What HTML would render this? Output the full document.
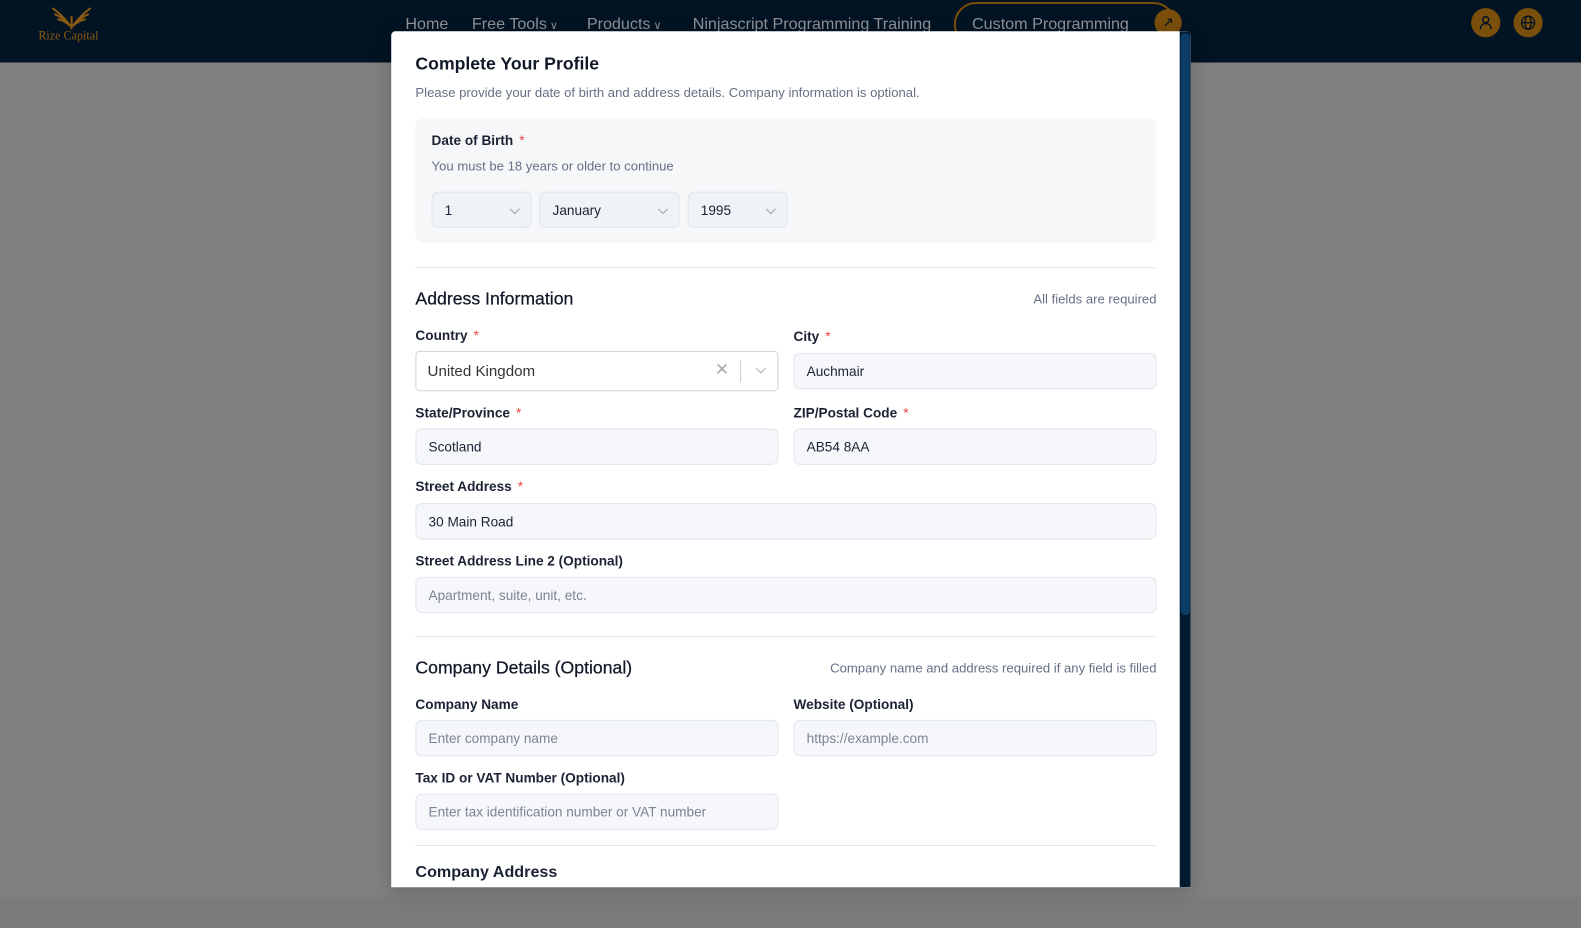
<!DOCTYPE html>
<html><head><meta charset="utf-8"><style>
*{box-sizing:border-box;margin:0;padding:0}
body{width:1581px;height:920px;overflow:hidden;background:#808080;font-family:"Liberation Sans",sans-serif;position:relative}
#w{position:absolute;left:0;top:0;width:1568px;height:913px;transform:scale(1.0083);transform-origin:0 0}
.hdr{position:absolute;left:0;top:0;width:1581px;height:62px;background:#021323}
.nav{position:absolute;top:16px;font-size:16px;color:#8f9398}
.nav small{font-size:11px;margin-left:3px}
.a{position:absolute}
.modal{position:absolute;left:388px;top:31px;width:793px;height:849px;background:#fff;border-radius:4px 4px 0 0;overflow:hidden;box-shadow:0 4px 20px rgba(0,0,0,.2)}
.sb{position:absolute;left:782px;top:0;width:11px;height:849px;background:#021a30}
.th{position:absolute;left:783px;top:2px;width:9px;height:577px;background:#0b3d66;border-radius:4px}
.lbl{position:absolute;font-size:13.5px;font-weight:bold;color:#1a2233}
.req{color:#ef4444;margin-left:6px;font-weight:normal}
.inp{position:absolute;height:36px;background:#f5f7fa;border:1px solid #e1e6ee;border-radius:6px;font-size:13.5px;color:#1a2233;padding:10px 12px 0}
.ph{color:#7c8593}
.h2{position:absolute;font-size:17.5px;color:#111827;-webkit-text-stroke:0.25px #111827}
.hr{position:absolute;left:24px;width:735px;height:1px;background:#e2e8f0}
.note{position:absolute;font-size:13px;color:#667085}
.chev{position:absolute;right:12px;top:13px;width:7px;height:7px;border-right:1.3px solid #9aa3af;border-bottom:1.3px solid #9aa3af;transform:rotate(45deg)}
</style></head><body><div id="w">
<div class="hdr">
 <svg class="a" style="left:50px;top:2px" width="42" height="28" viewBox="0 0 42 28"><g fill="none" stroke="#8a5a12" stroke-width="2"><path d="M20 24 C14 16 8 10 2 6"/><path d="M20 24 C15 18 9 14 4 12"/><path d="M20 24 C16 20 11 18 7 17"/><path d="M22 24 C28 16 34 10 40 6"/><path d="M22 24 C27 18 33 14 38 12"/><path d="M22 24 C26 20 31 18 35 17"/><path d="M21 14 V27"/></g></svg>
 <div class="a" style="left:38px;top:28px;font-family:'Liberation Serif',serif;font-size:12px;color:#8a5a12">Rize Capital</div>
 <div class="nav" style="left:402px">Home</div>
 <div class="nav" style="left:468px">Free Tools<small>∨</small></div>
 <div class="nav" style="left:582px">Products<small>∨</small></div>
 <div class="nav" style="left:687px">Ninjascript Programming Training</div>
 <div class="a" style="left:946px;top:2px;width:220px;height:44px;border:2px solid #7a4f0c;border-radius:22px"></div>
 <div class="nav" style="left:964px">Custom Programming</div>
 <div class="a" style="left:1145px;top:9px;width:27px;height:27px;border-radius:50%;background:#7a4f0c;color:#021323;font-size:14px;text-align:center;line-height:27px">↗</div>
 <div class="a" style="left:1459px;top:8px;width:29px;height:29px;border-radius:50%;background:#7a4f0c"><svg width="29" height="29" viewBox="0 0 29 29" fill="none" stroke="#021323" stroke-width="1.4"><circle cx="14.5" cy="11.5" r="3"/><path d="M9.5 21 v-1.5 a4 4 0 0 1 4-4 h2 a4 4 0 0 1 4 4 V21"/></svg></div>
 <div class="a" style="left:1501px;top:8px;width:29px;height:29px;border-radius:50%;background:#7a4f0c"><svg width="29" height="29" viewBox="0 0 29 29" fill="none" stroke="#021323" stroke-width="1.3"><circle cx="14.5" cy="14.5" r="6.5"/><ellipse cx="14.5" cy="14.5" rx="3" ry="6.5"/><path d="M8 14.5h13"/></svg></div>
</div>
<div class="a" style="left:0;top:890px;width:1581px;height:30px;background:#7b7b7b"></div>
<div class="modal">
 <div class="a" style="left:24px;top:22px;font-size:17.5px;font-weight:bold;color:#111827">Complete Your Profile</div>
 <div class="note" style="left:24px;top:53px">Please provide your date of birth and address details. Company information is optional.</div>
 <div class="a" style="left:24px;top:86px;width:735px;height:124px;background:#f6f7f9;border-radius:8px"></div>
 <div class="lbl" style="left:40px;top:101px">Date of Birth<span class="req">*</span></div>
 <div class="note" style="left:40px;top:126px">You must be 18 years or older to continue</div>
 <div class="inp" style="left:40px;top:159px;width:99px;background:#eff2f6">1<span class="chev"></span></div>
 <div class="inp" style="left:147px;top:159px;width:139px;background:#eff2f6">January<span class="chev"></span></div>
 <div class="inp" style="left:294px;top:159px;width:99px;background:#eff2f6">1995<span class="chev"></span></div>
 <div class="hr" style="top:234px"></div>
 <div class="h2" style="left:24px;top:255px">Address Information</div>
 <div class="note" style="right:34px;top:258px">All fields are required</div>
 <div class="lbl" style="left:24px;top:294px">Country<span class="req">*</span></div>
 <div class="lbl" style="left:399px;top:295px">City<span class="req">*</span></div>
 <div class="a" style="left:24px;top:317px;width:360px;height:40px;border:1px solid #cfd3d9;border-radius:4px;font-size:15px;color:#333;padding:11px 11px 0">United Kingdom
  <span class="a" style="left:296px;top:8px;color:#aaa;font-size:17px">✕</span>
  <span class="a" style="left:321px;top:8px;width:1px;height:22px;background:#ccc"></span>
  <span class="chev" style="right:13px;top:13px;border-color:#aaa"></span></div>
 <div class="inp" style="left:399px;top:319px;width:360px">Auchmair</div>
 <div class="lbl" style="left:24px;top:371px">State/Province<span class="req">*</span></div>
 <div class="lbl" style="left:399px;top:371px">ZIP/Postal Code<span class="req">*</span></div>
 <div class="inp" style="left:24px;top:394px;width:360px">Scotland</div>
 <div class="inp" style="left:399px;top:394px;width:360px">AB54 8AA</div>
 <div class="lbl" style="left:24px;top:444px">Street Address<span class="req">*</span></div>
 <div class="inp" style="left:24px;top:468px;width:735px">30 Main Road</div>
 <div class="lbl" style="left:24px;top:518px">Street Address Line 2 (Optional)</div>
 <div class="inp ph" style="left:24px;top:541px;width:735px">Apartment, suite, unit, etc.</div>
 <div class="hr" style="top:600px"></div>
 <div class="h2" style="left:24px;top:621px">Company Details (Optional)</div>
 <div class="note" style="right:34px;top:624px">Company name and address required if any field is filled</div>
 <div class="lbl" style="left:24px;top:660px">Company Name</div>
 <div class="lbl" style="left:399px;top:660px">Website (Optional)</div>
 <div class="inp ph" style="left:24px;top:683px;width:360px">Enter company name</div>
 <div class="inp ph" style="left:399px;top:683px;width:360px">https://example.com</div>
 <div class="lbl" style="left:24px;top:733px">Tax ID or VAT Number (Optional)</div>
 <div class="inp ph" style="left:24px;top:756px;width:360px">Enter tax identification number or VAT number</div>
 <div class="hr" style="top:807px"></div>
 <div class="a" style="left:24px;top:826px;font-size:16px;font-weight:bold;color:#1a2233">Company Address</div>
 <div class="sb"></div><div class="th"></div>
</div>
</div></body></html>
